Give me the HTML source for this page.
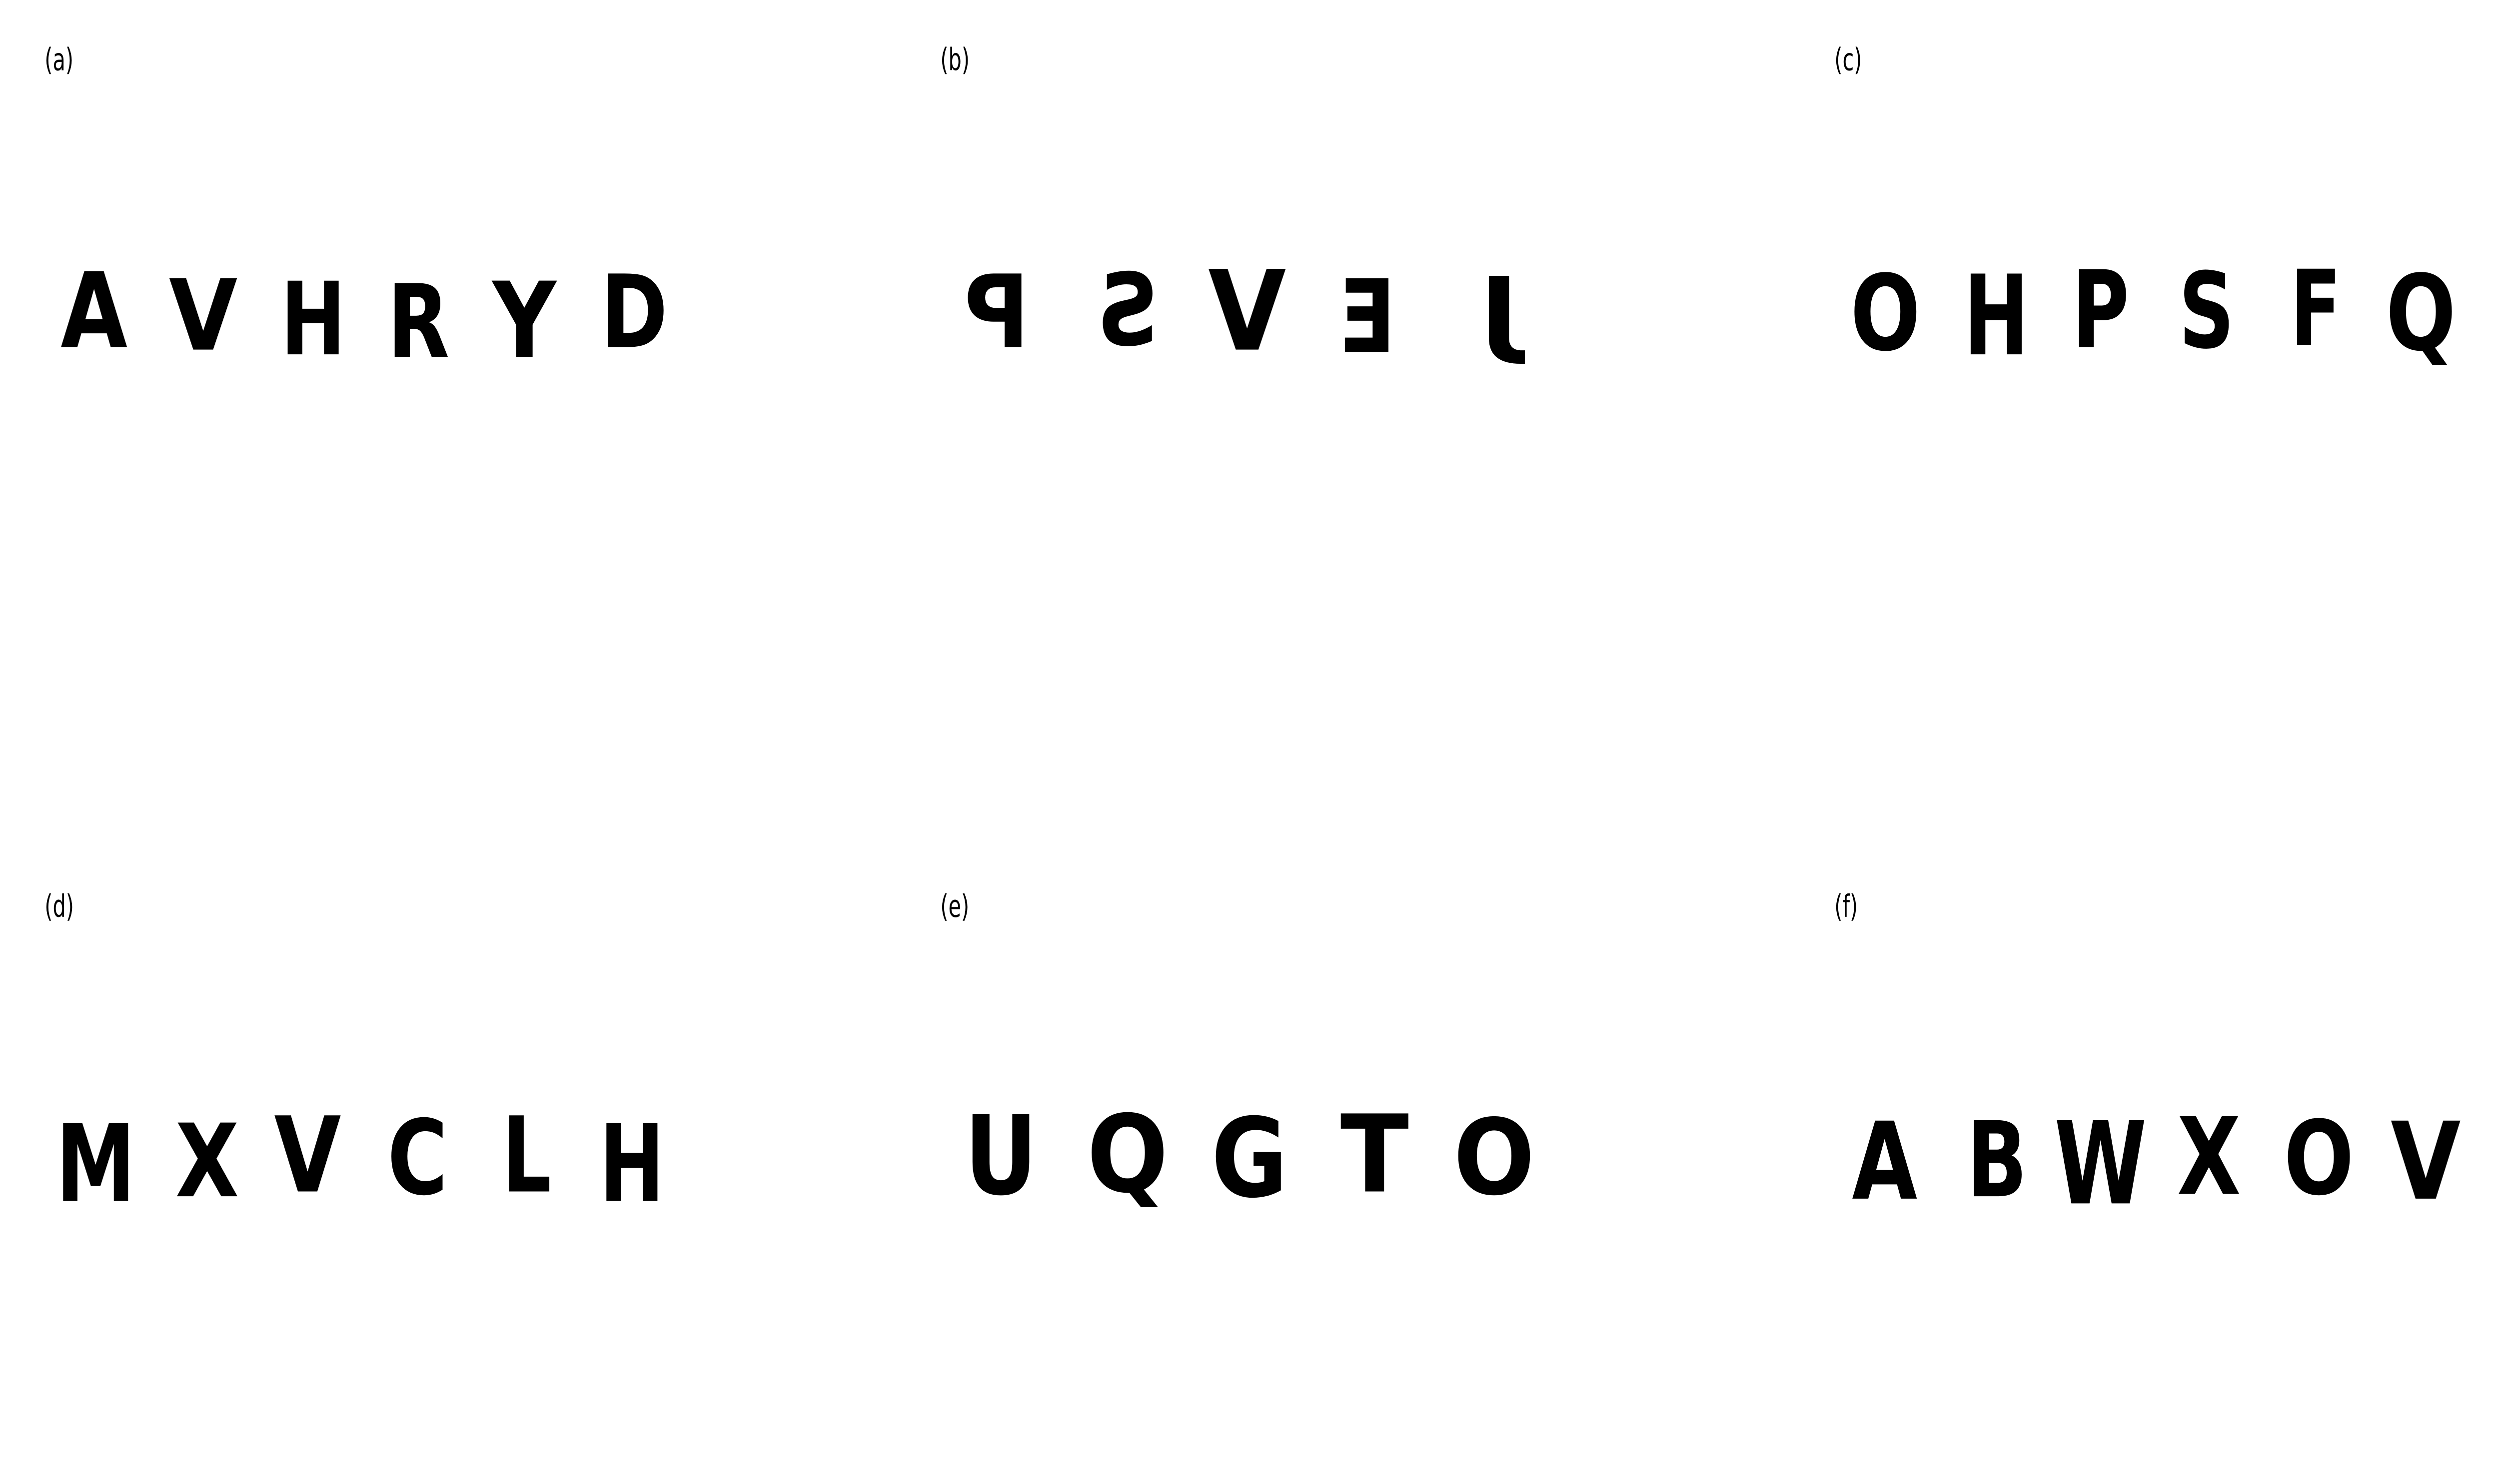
<!DOCTYPE html>
<html><head><meta charset="utf-8"><style>
html,body{margin:0;padding:0;background:#fff;width:100vw;height:100vh;overflow:hidden;}
svg{display:block;width:100vw;height:100vh;}
.l{font-family:"DejaVu Sans",sans-serif;font-weight:bold;fill:#000;}
.c{font-family:"DejaVu Sans",sans-serif;font-size:13px;fill:#000;}
</style></head><body>
<svg viewBox="0 0 1568 624" preserveAspectRatio="none" xmlns="http://www.w3.org/2000/svg">
<rect width="1568" height="624" fill="#fff"/>
<text class="c" x="28" y="29.5">(a)</text>
<text class="c" x="590" y="29.5">(b)</text>
<text class="c" x="1151" y="29.5">(c)</text>
<text class="c" x="28" y="385.5">(d)</text>
<text class="c" x="590" y="385.5">(e)</text>
<text class="c" x="1151" y="385.5">(f)</text>

<g class="l">
<text x="38" y="146" font-size="43.9" textLength="42" lengthAdjust="spacingAndGlyphs">A</text>
<text x="106" y="147" font-size="41.2" textLength="43" lengthAdjust="spacingAndGlyphs">V</text>
<text x="176" y="149" font-size="42.5" textLength="41" lengthAdjust="spacingAndGlyphs">H</text>
<text x="243" y="150" font-size="42.5" textLength="39" lengthAdjust="spacingAndGlyphs">R</text>
<text x="309" y="150" font-size="43.9" textLength="40" lengthAdjust="spacingAndGlyphs">Y</text>
<text x="377" y="146" font-size="42.5" textLength="42" lengthAdjust="spacingAndGlyphs">D</text>

<text transform="translate(1251,0) scale(-1,1)" x="605" y="146" font-size="42.5" textLength="41" lengthAdjust="spacingAndGlyphs">P</text>
<text transform="translate(1415,0) scale(-1,1)" x="688" y="145" font-size="42" textLength="39" lengthAdjust="spacingAndGlyphs">S</text>
<text transform="translate(1565,0) scale(-1,1)" x="758" y="147" font-size="46.6" textLength="49" lengthAdjust="spacingAndGlyphs">V</text>
<text transform="translate(1716,0) scale(-1,1)" x="840" y="148" font-size="42.5" textLength="36" lengthAdjust="spacingAndGlyphs">E</text>
<text transform="translate(1881,0) scale(-1,1)" x="928" y="145" font-size="39.8" textLength="25" lengthAdjust="spacingAndGlyphs">J</text>

<text x="1161" y="147" font-size="44" textLength="44" lengthAdjust="spacingAndGlyphs">O</text>
<text x="1232" y="149" font-size="46.6" textLength="41" lengthAdjust="spacingAndGlyphs">H</text>
<text x="1300" y="146" font-size="45" textLength="36" lengthAdjust="spacingAndGlyphs">P</text>
<text x="1367" y="146" font-size="44" textLength="35" lengthAdjust="spacingAndGlyphs">S</text>
<text x="1437" y="145" font-size="43.9" textLength="32" lengthAdjust="spacingAndGlyphs">F</text>
<text x="1497" y="147" font-size="44" textLength="44" lengthAdjust="spacingAndGlyphs">Q</text>

<text x="35" y="505" font-size="45" textLength="50" lengthAdjust="spacingAndGlyphs">M</text>
<text x="110" y="503" font-size="42.5" textLength="40" lengthAdjust="spacingAndGlyphs">X</text>
<text x="172" y="501" font-size="43.9" textLength="42" lengthAdjust="spacingAndGlyphs">V</text>
<text x="243" y="502" font-size="43.5" textLength="38" lengthAdjust="spacingAndGlyphs">C</text>
<text x="315" y="501" font-size="43.9" textLength="31" lengthAdjust="spacingAndGlyphs">L</text>
<text x="376" y="505" font-size="45" textLength="41" lengthAdjust="spacingAndGlyphs">H</text>

<text x="605" y="502" font-size="46" textLength="46" lengthAdjust="spacingAndGlyphs">U</text>
<text x="682" y="501" font-size="45" textLength="51" lengthAdjust="spacingAndGlyphs">Q</text>
<text x="760" y="503" font-size="46" textLength="48" lengthAdjust="spacingAndGlyphs">G</text>
<text x="841" y="501" font-size="45" textLength="43" lengthAdjust="spacingAndGlyphs">T</text>
<text x="912" y="502" font-size="44" textLength="51" lengthAdjust="spacingAndGlyphs">O</text>

<text x="1162" y="504" font-size="45" textLength="41" lengthAdjust="spacingAndGlyphs">A</text>
<text x="1234" y="503" font-size="43.9" textLength="38" lengthAdjust="spacingAndGlyphs">B</text>
<text x="1289" y="506" font-size="48" textLength="58" lengthAdjust="spacingAndGlyphs">W</text>
<text x="1366" y="502" font-size="45" textLength="40" lengthAdjust="spacingAndGlyphs">X</text>
<text x="1433" y="502" font-size="43" textLength="44" lengthAdjust="spacingAndGlyphs">O</text>
<text x="1500" y="504" font-size="45" textLength="44" lengthAdjust="spacingAndGlyphs">V</text>
</g>
</svg>
</body></html>
